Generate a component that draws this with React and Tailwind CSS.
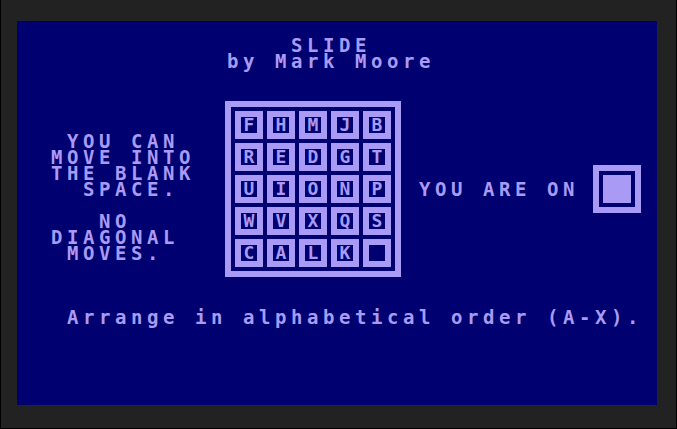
import React from "react";

const T =
  "font-['DejaVu_Sans_Mono',monospace] font-bold text-[19px] leading-[16px] tracking-[4.56px] whitespace-pre h-4 text-[#a99bf5]";

const board = [
  ["F", "H", "M", "J", "B"],
  ["R", "E", "D", "G", "T"],
  ["U", "I", "O", "N", "P"],
  ["W", "V", "X", "Q", "S"],
  ["C", "A", "L", "K", ""],
];

const leftLines = [
  { t: "YOU CAN", c: "pl-[50px]" },
  { t: "MOVE INTO", c: "pl-[34px]" },
  { t: "THE BLANK", c: "pl-[34px]" },
  { t: "SPACE.", c: "pl-[66px]" },
  { t: "", c: "" },
  { t: "NO", c: "pl-[82px]" },
  { t: "DIAGONAL", c: "pl-[34px]" },
  { t: "MOVES.", c: "pl-[50px]" },
];

function Tile({ ch }) {
  return (
    <div className="w-[28px] h-[28px] bg-[#a99bf5] flex items-center justify-center">
      <div className="w-4 h-4 bg-[#000070] text-[#a99bf5] font-['DejaVu_Sans_Mono',monospace] font-bold text-[18px] leading-[16px] text-center">
        {ch}
      </div>
    </div>
  );
}

export default function App() {
  return (
    <div className="w-[677px] h-[429px] bg-[#222222] border-l border-r border-b border-black pl-4 pt-[21px] overflow-hidden">
      <div className="w-[640px] h-[384px] bg-[#000070] flex flex-col">
        <div className="h-4" />
        <div className={`${T} pl-[274px]`}>SLIDE</div>
        <div className={`${T} pl-[210px]`}>by Mark Moore</div>
        <div className="h-8" />
        <div className="flex h-[176px]">
          <div className="w-[208px] pt-8 flex flex-col">
            {leftLines.map((l, i) => (
              <div key={i} className={`${T} ${l.c}`}>
                {l.t}
              </div>
            ))}
          </div>
          <div className="w-[176px] h-[176px] bg-[#a99bf5] p-[6px]">
            <div className="w-full h-full bg-[#000070] p-[4px] grid grid-cols-5 gap-[4px]">
              {board.flat().map((ch, i) => (
                <Tile key={i} ch={ch} />
              ))}
            </div>
          </div>
          <div className="flex items-center pl-4 pt-16 self-start">
            <div className={`${T} w-[160px] pl-[2px]`}>YOU ARE ON</div>
            <div className="w-12 h-12 bg-[#a99bf5] p-[6px] ml-4">
              <div className="w-full h-full bg-[#000070] p-[4px]">
                <div className="w-full h-full bg-[#a99bf5]" />
              </div>
            </div>
          </div>
        </div>
        <div className="h-8" />
        <div className={`${T} pl-[50px]`}>Arrange in alphabetical order (A-X).</div>
      </div>
    </div>
  );
}
